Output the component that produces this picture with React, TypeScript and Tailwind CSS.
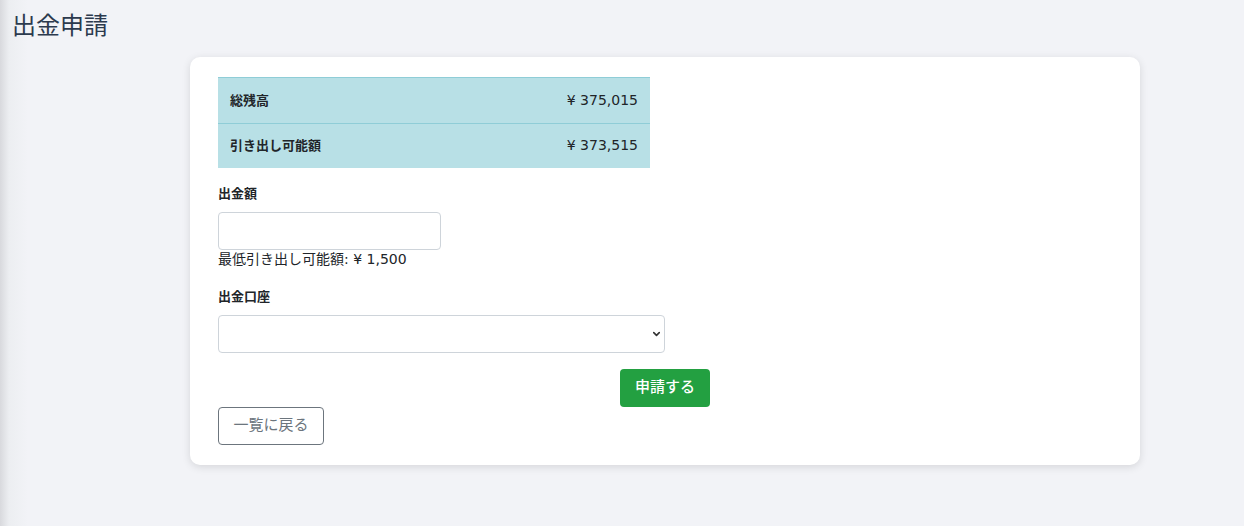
import { ChevronDown } from 'lucide-react';

const FONT = { fontFamily: "'DejaVu Sans', 'Noto Sans CJK JP', sans-serif" };

const BALANCES = [
  { label: '総残高', amount: '¥ 375,015' },
  { label: '引き出し可能額', amount: '¥ 373,515' },
];

export default function App() {
  return (
    <div
      className="min-h-screen bg-[#f2f3f7] bg-[linear-gradient(90deg,#d8d9dd,#eceef1_9px,#f2f3f7_28px)] text-[#212529]"
      style={FONT}
    >
      <h1 className="px-3 pt-[8px] text-[24px] leading-[36px] font-normal text-[#2c3a4e]">出金申請</h1>

      <div className="ml-[190px] mt-[13px] w-[950px] rounded-[10px] bg-white px-[28px] pt-[20px] pb-[20px] shadow-[0_2px_8px_rgba(0,0,0,0.12)]">
        <table className="w-[432px] border-collapse text-[13px]">
          <tbody>
            {BALANCES.map((row, i) => (
              <tr key={row.label} className="border-t border-[#8fcdd7] bg-[#b8e0e6]">
                <td className={`px-3 font-bold ${i === 0 ? 'h-[46px]' : 'h-[44px]'}`}>{row.label}</td>
                <td className="px-3 text-right text-[14px]">{row.amount}</td>
              </tr>
            ))}
          </tbody>
        </table>

        <div className="mt-[16px]">
          <label className="block text-[13px] font-bold leading-[20px]">出金額</label>
          <input
            type="text"
            className="mt-[8px] block h-[38px] w-[223px] rounded-[4px] border border-[#ced4da] bg-white px-3 text-[14px] outline-none"
          />
          <p className="text-[14px] leading-[19px]">最低引き出し可能額: ¥ 1,500</p>
        </div>

        <div className="mt-[18px]">
          <label className="block text-[13px] font-bold leading-[20px]">出金口座</label>
          <div className="relative mt-[8px] w-[447px]">
            <select className="block h-[38px] w-full appearance-none rounded-[4px] border border-[#ced4da] bg-white px-3 text-[14px] outline-none">
              <option value=""></option>
            </select>
            <ChevronDown
              className="pointer-events-none absolute right-[3px] top-1/2 h-[11px] w-[11px] -translate-y-1/2 text-[#333]"
              strokeWidth={3.5}
            />
          </div>
        </div>

        <div className="mt-[16px] flex justify-center">
          <button
            type="button"
            className="h-[38px] w-[90px] rounded-[4px] bg-[#23a041] text-[15px] font-medium text-white"
          >
            申請する
          </button>
        </div>

        <button
          type="button"
          className="block h-[38px] w-[106px] rounded-[4px] border border-[#6c757d] bg-white text-[15px] text-[#6c757d]"
        >
          一覧に戻る
        </button>
      </div>
    </div>
  );
}
